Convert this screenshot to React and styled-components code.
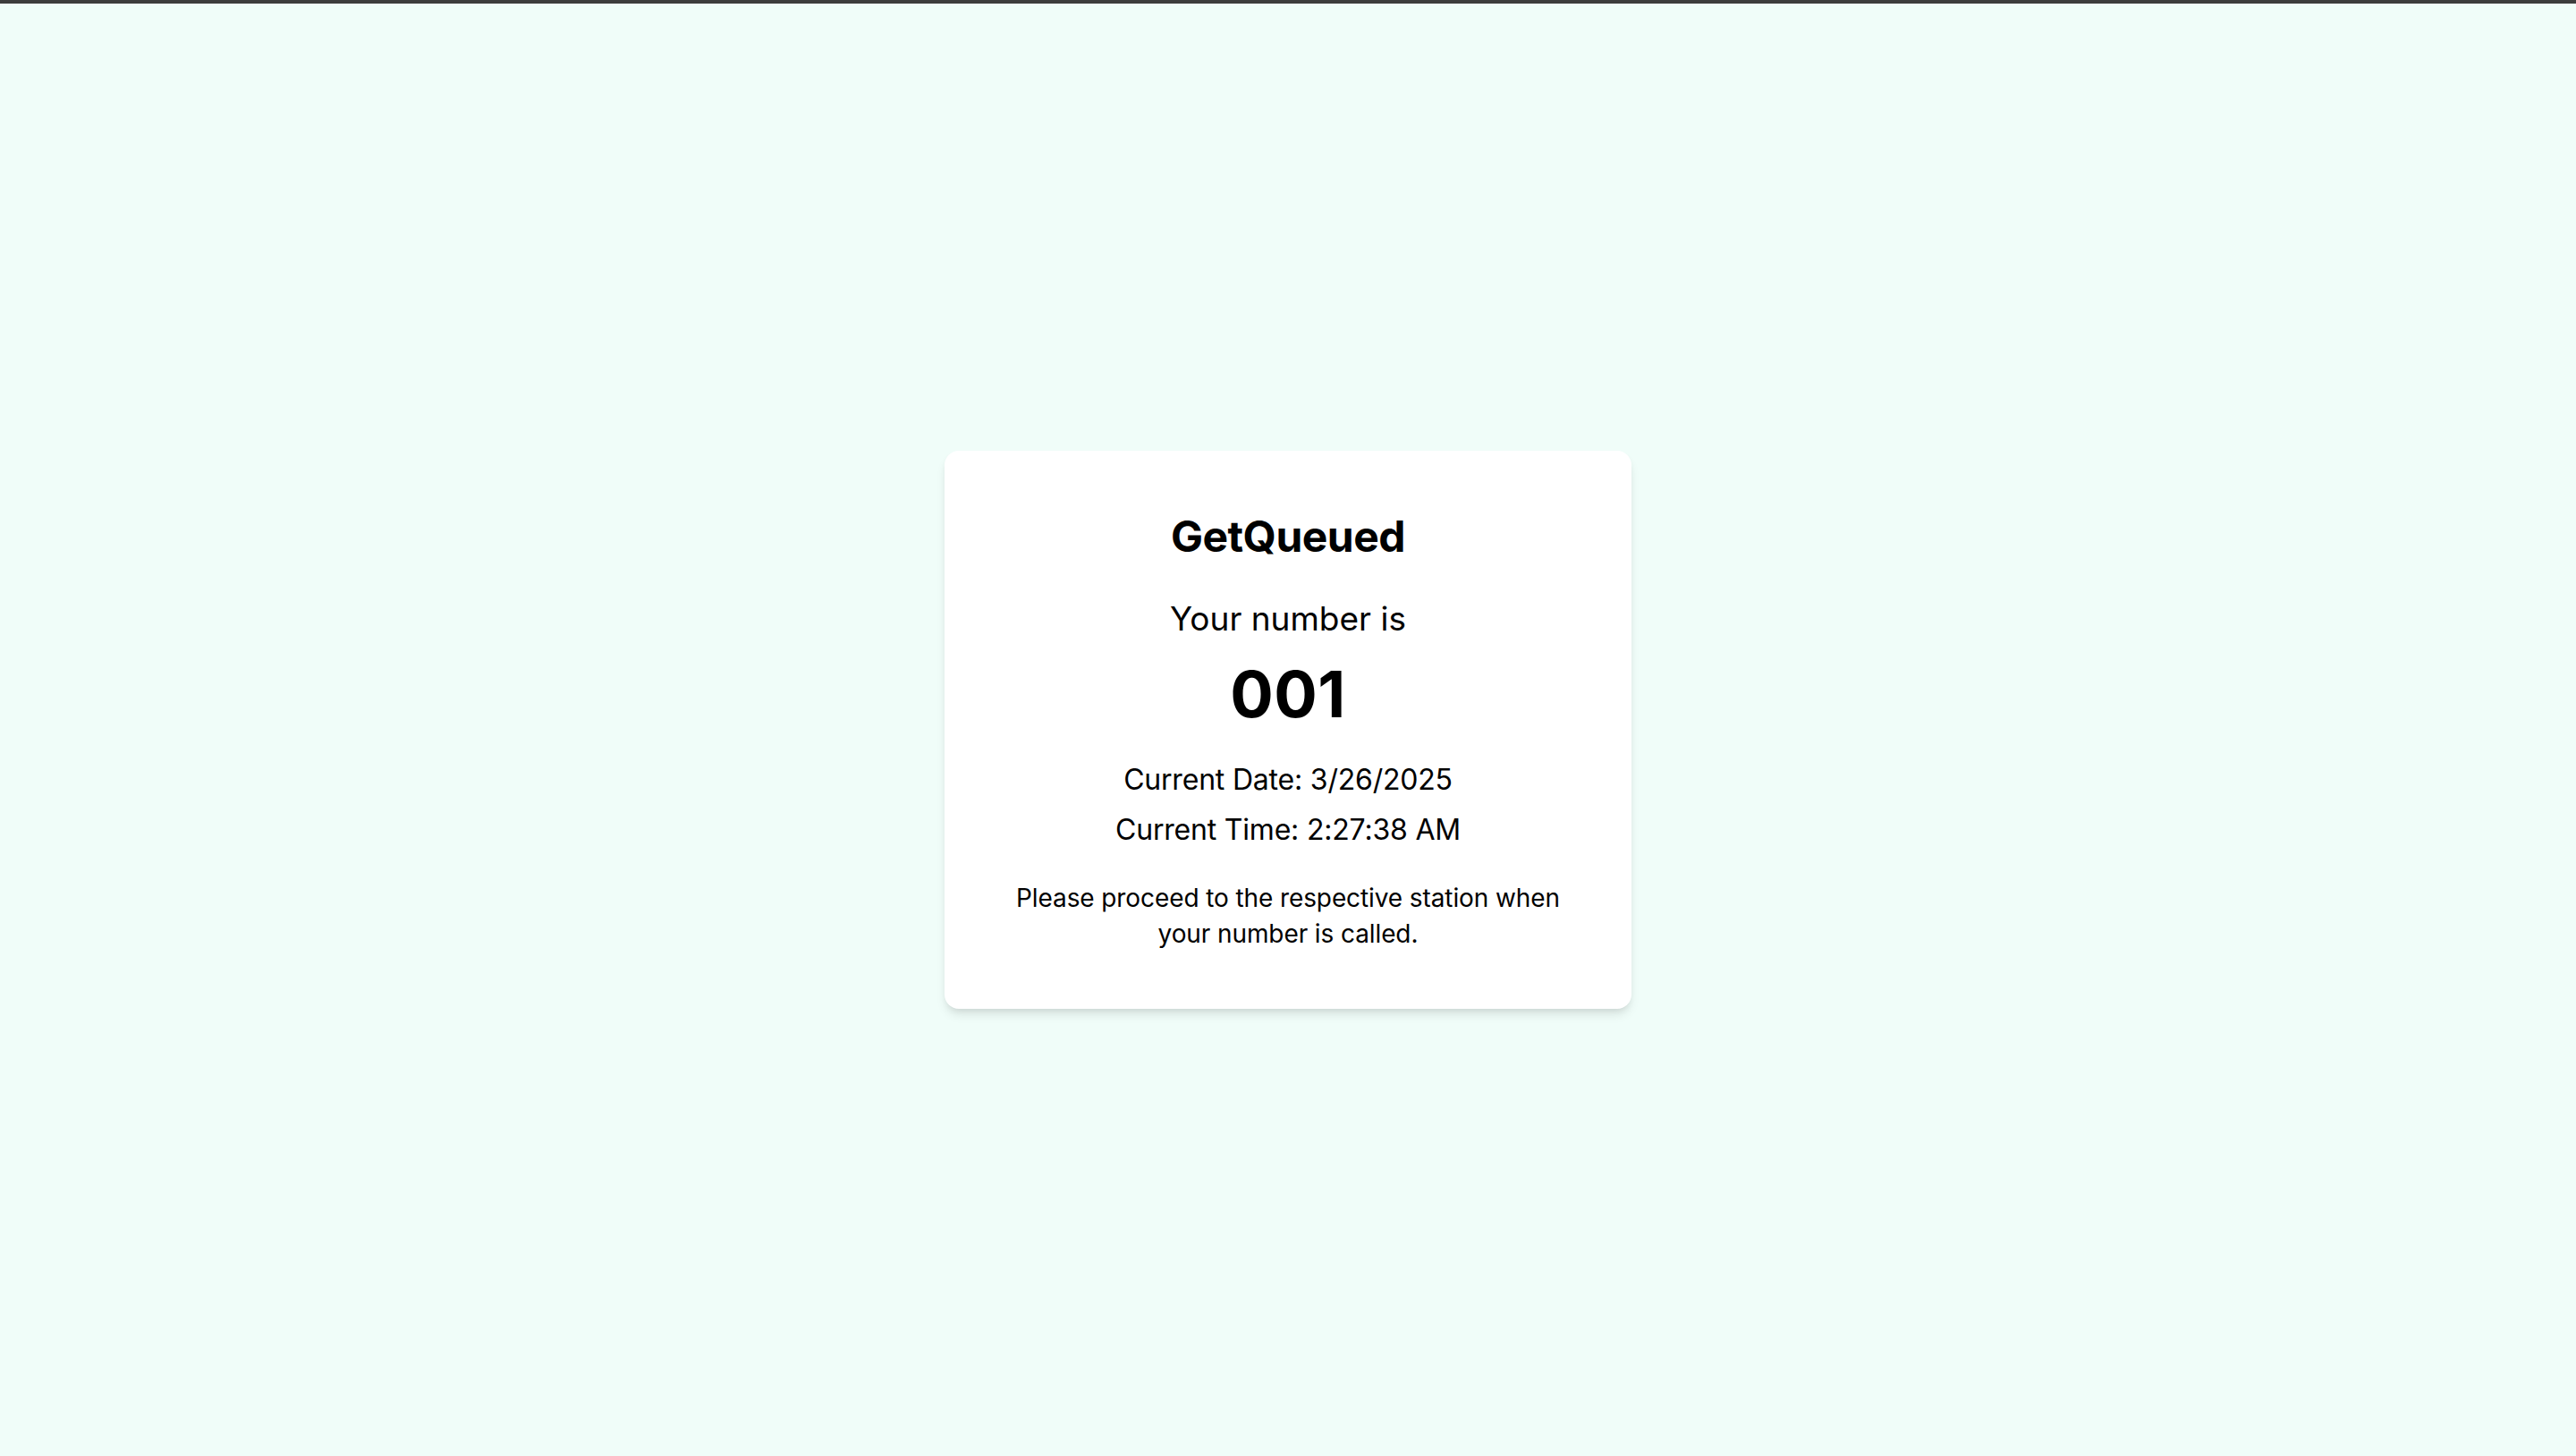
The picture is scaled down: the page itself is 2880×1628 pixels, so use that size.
import styled, { createGlobalStyle } from "styled-components";

const GlobalStyle = createGlobalStyle`
  html, body {
    margin: 0;
    padding: 0;
    background: #f0fdf9;
  }
  body {
    font-family: Inter, "Noto Sans", "Liberation Sans", sans-serif;
    color: #000;
    -webkit-font-smoothing: antialiased;
  }
  * {
    box-sizing: border-box;
  }
`;

const TopBar = styled.div`
  height: 4px;
  background: #3d3d3d;
`;

const Page = styled.main`
  height: 1624px;
  display: flex;
  align-items: center;
  justify-content: center;
  background: #f0fdf9;
`;

const Ticket = styled.section`
  width: 768px;
  padding: 64px;
  background: #ffffff;
  border-radius: 16px;
  box-shadow: 0 8px 12px -2px rgba(0, 0, 0, 0.1),
    0 4px 8px -4px rgba(0, 0, 0, 0.1);
  display: flex;
  flex-direction: column;
  align-items: center;
  text-align: center;
`;

const Brand = styled.h1`
  margin: 0 0 32px;
  font-size: 48px;
  line-height: 64px;
  font-weight: 700;
  letter-spacing: -0.5px;
`;

const Lead = styled.p`
  margin: 0 0 16px;
  font-size: 37px;
  line-height: 56px;
  font-weight: 400;
`;

const Number = styled.p`
  margin: 0 0 28px;
  font-size: 72px;
  line-height: 80px;
  font-weight: 700;
  letter-spacing: 0.5px;
`;

const Stamp = styled.div`
  margin-bottom: 28px;
`;

const StampLine = styled.p`
  margin: 0;
  font-size: 32px;
  line-height: 56px;
  letter-spacing: -0.2px;
`;

const Note = styled.p`
  margin: 0;
  font-size: 28px;
  line-height: 40px;
  letter-spacing: -0.1px;
`;

export default function App() {
  const ticket = "001";
  const date = "3/26/2025";
  const time = "2:27:38 AM";

  return (
    <>
      <GlobalStyle />
      <TopBar />
      <Page>
        <Ticket>
          <Brand>GetQueued</Brand>
          <Lead>Your number is</Lead>
          <Number>{ticket}</Number>
          <Stamp>
            <StampLine>Current Date: {date}</StampLine>
            <StampLine>Current Time: {time}</StampLine>
          </Stamp>
          <Note>
            Please proceed to the respective station when your number is
            called.
          </Note>
        </Ticket>
      </Page>
    </>
  );
}
